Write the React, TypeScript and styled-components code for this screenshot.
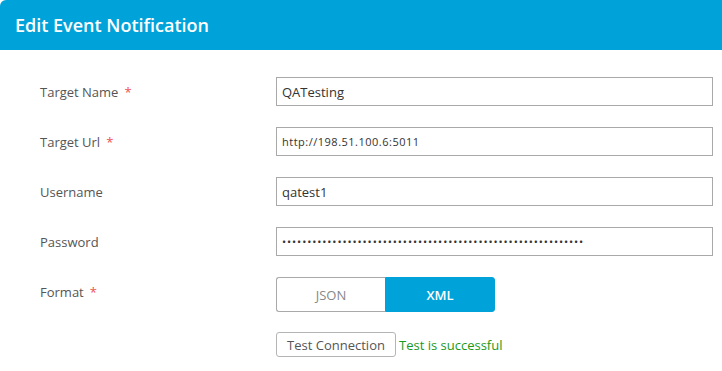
import React, { useState } from "react";
import styled, { createGlobalStyle } from "styled-components";

const GlobalStyle = createGlobalStyle`
  html, body {
    margin: 0;
    padding: 0;
    background: #ffffff;
  }
  body {
    font-family: "Open Sans", "Noto Sans", "Liberation Sans", sans-serif;
    color: #555555;
  }
`;

type Field = {
  label: string;
  value: string;
  required?: boolean;
  kind?: "text" | "url" | "password";
};

const fields: Field[] = [
  { label: "Target Name", value: "QATesting", required: true },
  { label: "Target Url", value: "http://198.51.100.6:5011", required: true, kind: "url" },
  { label: "Username", value: "qatest1" },
  { label: "Password", value: "x".repeat(60), kind: "password" },
];

const App = () => {
  const [format, setFormat] = useState<"JSON" | "XML">("XML");
  return (
    <>
      <GlobalStyle />
      <Dialog>
        <Header>
          <Title>Edit Event Notification</Title>
        </Header>
        <Form>
          {fields.map((field) => (
            <React.Fragment key={field.label}>
              <Label>
                {field.label}
                {field.required && <Star>*</Star>}
              </Label>
              <Input
                readOnly
                type={field.kind === "password" ? "password" : "text"}
                value={field.value}
                kind={field.kind || "text"}
              />
            </React.Fragment>
          ))}
          <Label>
            Format
            <Star>*</Star>
          </Label>
          <Toggle>
            {(["JSON", "XML"] as const).map((opt) => (
              <ToggleOption
                key={opt}
                active={format === opt}
                onClick={() => setFormat(opt)}
              >
                {opt}
              </ToggleOption>
            ))}
          </Toggle>
          <span />
          <TestRow>
            <TestButton>Test Connection</TestButton>
            <Success>Test is successful</Success>
          </TestRow>
        </Form>
      </Dialog>
    </>
  );
};

export default App;

const Dialog = styled.div`
  width: 722px;
  height: 371px;
  background: #ffffff;
  overflow: hidden;
`;

const Header = styled.div`
  height: 50px;
  background: #00a3d9;
  border-top-left-radius: 6px;
  display: flex;
  align-items: center;
  padding: 0 15px;
  box-sizing: border-box;
`;

const Title = styled.h1`
  margin: 0;
  font-size: 18px;
  font-weight: 600;
  color: #ffffff;
  letter-spacing: 0;
`;

const Form = styled.div`
  display: grid;
  grid-template-columns: 236px 437px;
  grid-auto-rows: 29px;
  row-gap: 21px;
  align-items: center;
  padding: 27px 0 0 40px;
`;

const Label = styled.label`
  font-size: 13px;
  color: #555555;
  display: flex;
  align-items: center;
`;

const Star = styled.span`
  color: #f0504f;
  margin-left: 6px;
  font-size: 13px;
`;

const Input = styled.input<{ kind: "text" | "url" | "password" }>`
  height: 29px;
  box-sizing: border-box;
  width: 100%;
  border: 1px solid #a9a9a9;
  border-radius: 0;
  padding: 0 5px;
  outline: none;
  font-family: inherit;
  color: #333333;
  font-size: ${({ kind }) => (kind === "text" ? "13px" : "11px")};
  letter-spacing: ${({ kind }) =>
    kind === "url" ? "0.5px" : kind === "password" ? "0.9px" : "0"};
`;

const Toggle = styled.div`
  display: flex;
  width: 219px;
  height: 35px;
  align-self: start;
`;

const ToggleOption = styled.button<{ active: boolean }>`
  flex: 1;
  border: 1px solid ${({ active }) => (active ? "#00a3d9" : "#a9a9a9")};
  background: ${({ active }) => (active ? "#00a3d9" : "#ffffff")};
  color: ${({ active }) => (active ? "#ffffff" : "#888888")};
  font-family: inherit;
  font-size: 13px;
  font-weight: ${({ active }) => (active ? 600 : 400)};
  cursor: pointer;
  &:first-child {
    border-radius: 3px 0 0 3px;
    border-right: none;
  }
  &:last-child {
    border-radius: 0 3px 3px 0;
  }
`;

const TestRow = styled.div`
  display: flex;
  align-items: center;
  gap: 3px;
  align-self: start;
  margin-top: 5px;
`;

const TestButton = styled.button`
  height: 25px;
  padding: 0 10px;
  border: 1px solid #b5b5b5;
  border-radius: 3px;
  background: #ffffff;
  color: #555555;
  font-family: inherit;
  font-size: 13px;
  width: 120px;
`;

const Success = styled.span`
  color: #1a9a1a;
  font-size: 13px;
`;
